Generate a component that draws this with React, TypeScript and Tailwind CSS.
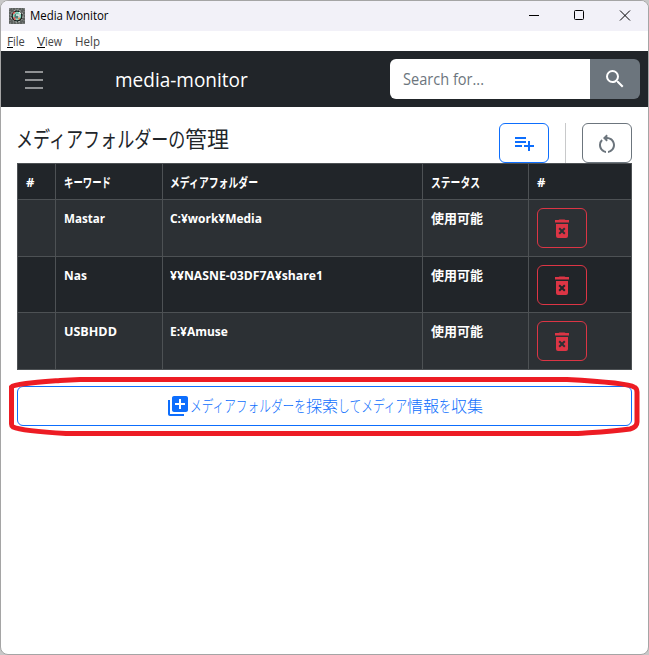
import React, { useLayoutEffect, useRef } from 'react';
import { MdSearch, MdPlaylistAdd, MdLibraryAdd } from 'react-icons/md';

/** Single-line text condensed or widened to the width of its box. */
function Fit({ children, className = '' }: { children: string; className?: string }) {
  const box = useRef<HTMLSpanElement>(null);
  const text = useRef<HTMLSpanElement>(null);
  useLayoutEffect(() => {
    if (box.current && text.current) {
      const scale = box.current.clientWidth / text.current.offsetWidth;
      text.current.style.transform = `scaleX(${scale})`;
    }
  }, []);
  return (
    <span ref={box} className={`inline-block shrink-0 whitespace-nowrap ${className}`}>
      <span ref={text} className="inline-block origin-left">
        {children}
      </span>
    </span>
  );
}

function AppIcon() {
  return (
    <svg className="h-4 w-4" viewBox="0 0 16 16">
      <rect width="16" height="16" fill="#5c605e" />
      <path d="M0 1h16M1 15h15M1 0v16M15 0v16" stroke="#8d928f" strokeDasharray="1 2" />
      <circle cx="8" cy="8" r="6" fill="#1c2422" stroke="#c5ccc8" strokeDasharray="2 1" />
      <circle cx="8" cy="8" r="3.4" fill="#4d7d78" stroke="#8adbc0" strokeWidth="1.6" />
      <path d="M4 6l2-2M5 9l1 3" stroke="#e65858" strokeWidth="1.6" />
      <path d="M10 4l2 2M7 7h3v3" stroke="#e8efe9" strokeWidth="1.3" fill="none" />
      <path d="M9 11l2-1" stroke="#e08a5d" strokeWidth="1.6" />
    </svg>
  );
}

function RestartIcon() {
  return (
    <svg className="mt-px h-6 w-6" viewBox="0 0 24 24" fill="currentColor">
      <path d="M6 13c0-1.65.67-3.15 1.76-4.24L6.34 7.34A8.014 8.014 0 0 0 4 13c0 4.08 3.05 7.44 7 7.93v-2.02c-2.83-.48-5-2.94-5-5.91zm14 0c0-4.42-3.58-8-8-8-.06 0-.12.01-.18.01l1.09-1.09L11.5 2.5 8 6l3.5 3.5 1.41-1.41-1.08-1.08c.06 0 .12-.01.17-.01 3.31 0 6 2.69 6 6 0 2.97-2.17 5.43-5 5.91v2.02c3.95-.49 7-3.85 7-7.93z" />
    </svg>
  );
}

function DeleteIcon() {
  return (
    <svg className="h-6 w-6" viewBox="0 0 24 24" fill="currentColor">
      <path
        fillRule="evenodd"
        d="M6 20a2 2 0 0 0 2 2h8a2 2 0 0 0 2-2V8H6v12zm2.46-7.12 1.41-1.41L12 13.59l2.12-2.12 1.41 1.41L13.41 15l2.12 2.12-1.41 1.41L12 16.41l-2.12 2.12-1.41-1.41L10.59 15l-2.13-2.12zM15.5 4l-1-.5h-5l-1 .5H5v2.5h14V4z"
      />
    </svg>
  );
}

const rows = [
  { key: 'Mastar', keyW: 'w-[41px]', path: 'C:¥work¥Media', pathW: 'w-[92px]', h: 'h-[57px]', bg: 'bg-[#2c3034]' },
  { key: 'Nas', keyW: 'w-[23px]', path: '¥¥NASNE-03DF7A¥share1', pathW: 'w-[153px]', h: 'h-[56px]', bg: 'bg-[#212529]' },
  { key: 'USBHDD', keyW: 'w-[53px]', path: 'E:¥Amuse', pathW: 'w-[58px]', h: 'h-[57px]', bg: 'bg-[#2c3034]' },
];

const grid = 'grid grid-cols-[38px_107px_260px_106px_103px] border-b border-[#4d5154]';
const cell = 'border-r border-[#4d5154] px-2 pt-2 leading-5';
const pathCell = 'border-r border-[#4d5154] pr-2 pl-[7px] pt-2 leading-5';

export default function App() {
  return (
    <div className="h-[655px] w-[649px] overflow-hidden bg-[#c8c8c8] font-['Open_Sans','Noto_Sans_CJK_JP',sans-serif] text-[#212529]">
      <div className="relative flex h-[655px] flex-col overflow-hidden rounded-lg border border-[#a5a5a5] bg-white">
        <header className="flex h-[30px] shrink-0 items-center bg-[#f2f1f8] pl-2 text-xs text-black">
          <AppIcon />
          <Fit className="ml-[5px] w-[79px]">Media Monitor</Fit>
          <svg className="ml-auto h-[30px] w-[120px]" viewBox="0 0 120 30" fill="none" stroke="#000">
            <path d="M1 14.5h10" />
            <rect x="46.5" y="9.5" width="9" height="9" rx="1" />
            <path d="M92 9.5l10 10M102 9.5l-10 10" />
          </svg>
        </header>
        <nav className="flex h-5 shrink-0 items-start pt-[3px] pl-[6px] text-xs text-[#444]">
          <span className="mr-3 flex">
            <Fit className="h-[14px] w-[6px] border-b border-black leading-[15px]">F</Fit>
            <Fit className="w-3 leading-[15px]">ile</Fit>
          </span>
          <span className="mr-[13px] flex">
            <Fit className="h-[14px] w-2 border-b border-black leading-[15px]">V</Fit>
            <Fit className="w-[17px] leading-[15px]">iew</Fit>
          </span>
          <Fit className="w-[25px] leading-[15px]">Help</Fit>
        </nav>
        <div className="flex h-14 shrink-0 items-center bg-[#212529] pr-2 pl-6">
          <div className="flex w-[18px] flex-col gap-[6px] pt-px">
            <span className="h-[2px] bg-[#909294]" />
            <span className="h-[2px] bg-[#909294]" />
            <span className="h-[2px] bg-[#909294]" />
          </div>
          <Fit className="ml-[72px] w-[133px] pt-[2px] text-xl text-white">media-monitor</Fit>
          <div className="ml-auto flex h-10 w-[250px] overflow-hidden rounded-md">
            <div className="flex flex-1 items-center bg-white pl-[13px] text-base text-[#6c757d]">
              <Fit className="w-[81px]">Search for...</Fit>
            </div>
            <button className="flex w-[50px] items-center justify-center bg-[#6c757d] text-white">
              <MdSearch className="h-6 w-6" />
            </button>
          </div>
        </div>
        <main className="px-4 pt-4">
          <div className="flex h-10">
            <h1 className="-ml-px flex text-[22px] leading-[30px]">
              <Fit className="w-[169px]">メディアフォルダーの</Fit>
              <Fit className="w-11">管理</Fit>
            </h1>
            <button className="ml-auto flex h-10 w-[50px] items-center justify-center rounded-md border border-[#0d6efd] text-[#0d6efd]">
              <MdPlaylistAdd className="h-6 w-6" />
            </button>
            <div className="mx-4 w-px bg-[#c8c9ca]" />
            <button className="flex h-10 w-[50px] items-center justify-center rounded-md border border-[#6c757d] text-[#6c757d]">
              <RestartIcon />
            </button>
          </div>
          <div className="w-[615px] border-t border-l border-[#4d5154] text-[13px] font-bold text-white">
            <div className={`${grid} h-9 bg-[#212529]`}>
              <div className={cell}>#</div>
              <div className={cell}><Fit className="w-[47px]">キーワード</Fit></div>
              <div className={pathCell}><Fit className="w-[88px]">メディアフォルダー</Fit></div>
              <div className={cell}><Fit className="w-[49px]">ステータス</Fit></div>
              <div className={cell}>#</div>
            </div>
            {rows.map((r) => (
              <div key={r.key} className={`${grid} ${r.h} ${r.bg}`}>
                <div className={cell} />
                <div className={cell}><Fit className={r.keyW}>{r.key}</Fit></div>
                <div className={pathCell}><Fit className={r.pathW}>{r.path}</Fit></div>
                <div className={cell}><Fit className="-mt-px w-[52px]">使用可能</Fit></div>
                <div className={cell}>
                  <button className="flex h-10 w-[50px] items-center justify-center rounded-md border border-[#dc3545] text-[#dc3545]">
                    <DeleteIcon />
                  </button>
                </div>
              </div>
            ))}
          </div>
          <button className="mt-4 flex h-10 w-full items-center justify-center rounded-md border border-[#0d6efd] text-base text-[#0d6efd]">
            <MdLibraryAdd className="h-6 w-6" />
            <span className="flex pb-[2px] font-['Noto_Sans_CJK_JP',sans-serif] font-light">
              <Fit className="w-[116px]">メディアフォルダーを</Fit>
              <Fit className="w-8">探索</Fit>
              <Fit className="w-[69px]">してメディア</Fit>
              <Fit className="w-8">情報</Fit>
              <Fit className="w-3">を</Fit>
              <Fit className="w-8">収集</Fit>
            </span>
          </button>
        </main>
        <svg className="pointer-events-none absolute top-[370px] left-0 h-[70px] w-[647px]" viewBox="1 371 647 70" fill="none">
          <path
            d="M11.5 387C14 384 35 382.5 60 380.5L80 379.5H567C595 381 628 383 634 387Q637 388 637 392V422Q637 427 630 429C610 432 592 432.5 578 433.5H66C40 432 20 430 13 427Q11.5 426 11.5 424Z"
            stroke="#ed1c24"
            strokeWidth="5"
          />
        </svg>
      </div>
    </div>
  );
}
